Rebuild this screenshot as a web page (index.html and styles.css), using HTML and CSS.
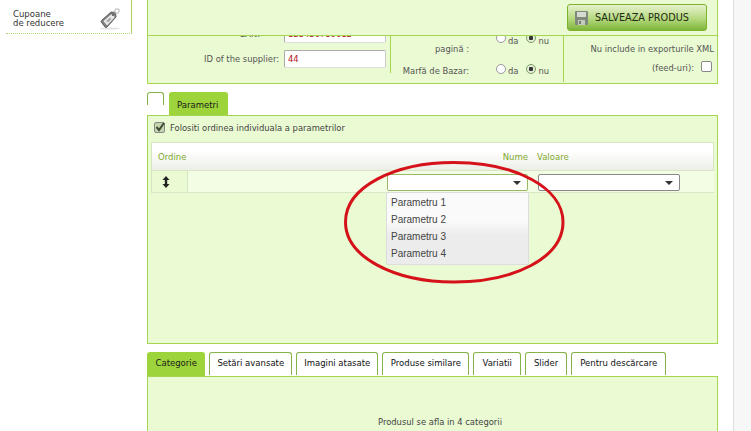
FILE: index.html
```html
<!DOCTYPE html>
<html lang="ro">
<head>
<meta charset="utf-8">
<title>Parametri</title>
<link rel="stylesheet" href="styles.css">
</head>
<body>
<div class="page">
  <aside class="sidebar">
    <div class="side-item">
      <span class="side-label">Cupoane<br>de reducere</span>
      <svg class="tag-icon" width="21" height="22" viewBox="0 0 21 22"><ellipse cx="10" cy="20.500" rx="10" ry="1" fill="#e2e2e2"/><path d="M1.500 12.500 11 4l4.500.5.500 4.500-9 10a1.500 1.500 0 0 1-2 0l-3.500-4.500a1.500 1.500 0 0 1 0-2z" fill="#7f7f7f" stroke="#5f5f5f"/><path d="M3.500 13 11 6.500l3 .5.500 2.500L7 17.500z" fill="#e9e9e9"/><path d="M6 13l4-3.500 1.500 1.500-3.500 3.500z" fill="#a9a9a9"/><circle cx="13" cy="7" r="1" fill="#555"/><circle cx="17" cy="3" r="2.200" fill="none" stroke="#c4c4c4" stroke-width="1.200"/></svg>
    </div>
  </aside>
  <main class="main">
    <div class="sticky">
      <button class="save"><svg class="disk" width="13" height="14" viewBox="0 0 13 14"><rect width="13" height="14" rx="1" fill="#7f8a7a"/><rect x="2" y="1" width="9" height="5" fill="#d6dcd2"/><rect x="3" y="9" width="7" height="5" fill="#c4cabf"/><rect x="4" y="10" width="2" height="3" fill="#77806f"/></svg><span>SALVEAZA PRODUS</span></button>
    </div>
    <section class="form-panel">
      <div class="col col-a">
        <div class="field cut"><label>EAN:</label><span class="input">123456789012</span></div>
        <div class="field"><label>ID of the supplier:</label><span class="input">44</span></div>
      </div>
      <div class="col col-b">
        <div class="opt cut2"><label>pagină :</label><span class="radios"><i class="radio"></i><em>da</em><i class="radio on"></i><em>nu</em></span></div>
        <div class="opt"><label>Marfă de Bazar:</label><span class="radios"><i class="radio"></i><em>da</em><i class="radio on"></i><em>nu</em></span></div>
      </div>
      <div class="col col-c">
        <p>Nu include in exporturile XML</p>
        <p class="feed">(feed-uri):<i class="check"></i></p>
      </div>
    </section>
    <nav class="tabs tabs-a">
      <span class="tab empty"></span>
      <span class="tab active">Parametri</span>
    </nav>
    <section class="params">
      <div class="use-order"><i class="check checked"><svg width="10" height="10" viewBox="0 0 10 10"><path d="M1.500 5 4 8 9 1" fill="none" stroke="#3c4a35" stroke-width="2"/></svg></i>Folositi ordinea individuala a parametrilor</div>
      <div class="grid-head"><span class="h-ord">Ordine</span><span class="h-name">Nume</span><span class="h-val">Valoare</span></div>
      <div class="grid-row">
        <div class="cell-move"><svg width="8" height="12" viewBox="0 0 8 12"><path d="M4 0 7.500 4H5.200v4H7.500L4 12 .5 8h2.300V4H.5z" fill="#222"/></svg></div>
        <div class="select name-select"><b></b></div>
        <div class="select val-select"><b></b></div>
      </div>
      <ul class="menu">
        <li>Parametru 1</li>
        <li>Parametru 2</li>
        <li>Parametru 3</li>
        <li>Parametru 4</li>
      </ul>
    </section>
    <nav class="tabs tabs-b">
      <span class="tab active">Categorie</span>
      <span class="tab">Setări avansate</span>
      <span class="tab">Imagini atasate</span>
      <span class="tab mid">Produse similare</span>
      <span class="tab wide">Variatii</span>
      <span class="tab wide">Slider</span>
      <span class="tab wide">Pentru descărcare</span>
    </nav>
    <section class="cat-panel">Produsul se afla in 4 categorii</section>
  </main>
  <div class="gutter"></div>
</div>
<svg class="circle" width="222" height="126" viewBox="0 0 222 126"><path d="M1.500 62C1.500 27 50 2.500 110 2.500 172 2.500 219 28 219 62 219 98 170 122 110 122 50 122 1.500 97 1.500 62z" fill="none" stroke="#d5121a" stroke-width="3"/></svg>
</body>
</html>
```
FILE: styles.css
```css
* { box-sizing: border-box; }
html, body { margin: 0; padding: 0; height: 431px; overflow: hidden; background: #fff; }
body { font-family: "DejaVu Sans", Verdana, sans-serif; font-size: 8.400px; color: #444; position: relative; }
.page { display: flex; width: 751px; height: 431px; overflow: hidden; }
.sidebar { width: 132px; flex: none; }
.side-item { height: 34px; margin-left: 6px; border-right: 1px solid #a8d25c; border-bottom: 1px dotted #b5d77a; display: flex; justify-content: space-between; align-items: flex-start; padding: 10px 10px 0 7px; color: #333; line-height: 9px; }
.side-label { font-size: 8.500px; }
.tag-icon { margin-top: -2px; }
.main { width: 571px; margin-left: 15px; flex: none; position: relative; }
.gutter { flex: 1; margin-left: 15px; border-left: 1px solid #ddd; background: #f7f7f7; }
.sticky { height: 36px; background: #eafad2; border: 1px solid #a5d650; border-top: 0; display: flex; justify-content: flex-end; align-items: flex-start; padding: 4px 10px 0 0; position: relative; z-index: 1; }
.save { width: 140px; height: 27px; border: 1px solid #7cb52b; border-radius: 3px; background: linear-gradient(#e7f2cf, #b6d97f 55%, #7fb53a); display: flex; align-items: center; padding: 0 0 0 7px; font: 9.700px "DejaVu Sans", sans-serif; color: #1d2b12; gap: 7px; }
.form-panel { height: 48px; background: #eafad2; border: 1px solid #a5d650; border-top: 0; display: flex; overflow: hidden; }
.col-a { width: 243px; height: 37px; flex: none; border-right: 1px solid #a5d650; }
.field { display: flex; justify-content: flex-end; align-items: center; height: 18px; margin-top: 7px; padding-right: 4px; }
.field.cut { margin-top: -11px; }
.field label { margin-right: 5px; color: #555; white-space: nowrap; }
.field.cut label { margin-right: 24px; }
.input { width: 102px; height: 18px; background: #fff; border: 1px solid; border-color: #aaa #ccc #ddd #aaa; border-radius: 2px; color: #b0121a; padding: 0 3px; line-height: 16px; }
.col-b { width: 173px; height: 46px; flex: none; border-right: 1px solid #a5d650; }
.opt { display: flex; height: 30px; align-items: flex-start; }
.opt.cut2 { margin-top: -2px; }
.opt label { width: 78px; flex: none; text-align: right; color: #555; padding-top: 2px; line-height: 10px; white-space: nowrap; }
.cut2 label { padding-top: 10px; }
.radios { margin-left: 27px; display: flex; align-items: flex-start; }
.radios em { font-style: normal; margin: 2px 8px 0 2px; color: #555; line-height: 10px; }
.radios em:last-child { margin-right: 0; }
.cut2 .radio { margin-top: -1px; }
.radio { width: 10px; height: 10px; border-radius: 50%; background: #fff; border: 1px solid #999; }
.radio.on { background: radial-gradient(circle, #333 0 2px, #e5f0d8 2.500px); border-color: #7c9a66; }
.col-c { flex: 1; text-align: right; padding: 6px 3px 0 0; color: #555; }
.col-c p { margin: 0; line-height: 14px; white-space: nowrap; }
.col-c .feed { margin-top: 5px; display: flex; justify-content: flex-end; align-items: flex-start; gap: 7px; padding-right: 2px; }
.check { display: inline-block; width: 11px; height: 11px; background: #fff; border: 1px solid #888; border-radius: 2px; }
.check.checked { background: #c3d6ac; margin-right: 5px; vertical-align: -2px; }
.check svg { display: block; margin: -1px 0 0 0; }
.tabs { display: flex; align-items: flex-end; }
.tabs-a { height: 23px; margin-top: 8px; gap: 5px; }
.tabs-b { height: 24px; margin-top: 8px; gap: 4px; }
.tab { display: block; height: 23px; background: #fff; border: 1px solid #86b347; border-bottom: 0; border-radius: 3px 3px 0 0; color: #111; font-size: 8.500px; line-height: 21px; padding: 0 7px; margin-bottom: 1px; white-space: nowrap; }
.tab.mid { padding: 0 7.500px; }
.tab.wide { padding: 0 8px; }
.tab.active { background: #9ed43b; border-color: #9ed43b; margin-bottom: 0; height: 24px; color: #1a1a1a; padding: 0 7.500px; }
.tabs-a .tab.empty { width: 17px; height: 13px; margin-bottom: 10px; padding: 0; }
.tabs-a .tab.active { width: 59px; height: 23px; line-height: 24px; padding: 0 7px; }
.params { height: 229px; background: #eafad2; border: 1px solid #a5d650; position: relative; padding: 0 3px; }
.use-order { height: 26px; padding: 7px 3px 0; color: #444; white-space: nowrap; }
.use-order .check { margin-top: -1px; }
.grid-head { height: 29px; border: 1px solid #d6e6c2; border-bottom: 1px solid #d9e6c8; background: linear-gradient(#fff 30%, #ecefe6); display: flex; align-items: center; color: #7fa82d; padding: 0 0 0 6px; font-size: 8.500px; }
.h-ord { flex: 1; }
.h-name { margin-right: 9px; }
.h-val { width: 176px; }
.grid-row { height: 22px; background: #f3fde3; border-bottom: 1px solid #d9e6c8; position: relative; display: flex; align-items: center; }
.cell-move { width: 37px; height: 21px; background: #eafad2; border: 1px solid #d6e6c2; border-width: 0 1px; display: flex; align-items: center; justify-content: center; padding-right: 7px; }
.select { height: 17px; margin-top: 1px; background: #fff; border-radius: 2px; position: relative; }
.select b { position: absolute; right: 6px; top: 6px; border: 4px solid transparent; border-top-color: #333; border-bottom: 0; }
.name-select { width: 141px; margin-left: 199px; border: 1px solid #9ab767; }
.val-select { width: 142px; margin-left: 10px; border: 1px solid #888; }
.menu { list-style: none; margin: 0; padding: 1px 0 0; position: absolute; left: 238px; top: 76px; width: 143px; height: 73px; border: 1px solid #ddd; border-radius: 2px; background: linear-gradient(#fafafa 40%, #ececec 60%); font: 10px/17px "Liberation Sans", Arial, sans-serif; color: #444; }
.menu li { padding-left: 4px; }
.cat-panel { height: 60px; background: #eafad2; border: 1px solid #a5d650; text-align: center; padding: 40px 0 0 15px; line-height: 11px; }
.circle { position: absolute; left: 344px; top: 160px; }
```
